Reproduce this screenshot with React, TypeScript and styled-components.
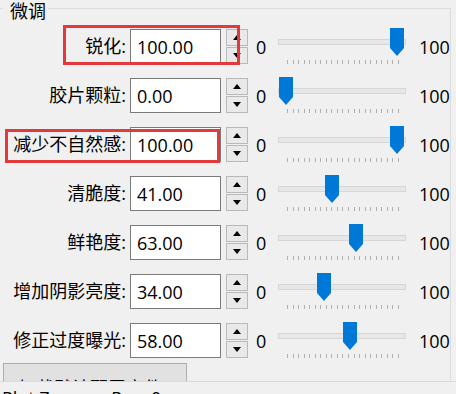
import React from "react";
import styled, { createGlobalStyle } from "styled-components";

const Global = createGlobalStyle`
  html, body { margin: 0; padding: 0; background: #f0f0f0; }
  body { font-family: "Open Sans", "Noto Sans CJK SC", sans-serif; color: #000; }
`;

const Page = styled.div`
  width: 456px;
  height: 394px;
  overflow: hidden;
  background: #f0f0f0;
  display: flex;
  flex-direction: column;
  font-family: "Open Sans", "Noto Sans CJK SC", sans-serif;
`;

const Viewport = styled.div`
  height: 381px;
  overflow: hidden;
  flex: none;
`;

const Group = styled.fieldset`
  margin: 0 5px 0 0;
  padding: 12px 0 0 0;
  border: 1px solid #dcdcdc;
  border-left: none;
  min-width: 0;
`;

const Legend = styled.legend`
  margin-left: 3px;
  padding: 0 2px 0 7px;
  font-size: 18px;
  line-height: 22px;
  height: 17px;
`;

const Rows = styled.div`
  display: flex;
  flex-direction: column;
  gap: 14px;
`;

const Row = styled.div`
  position: relative;
  display: flex;
  align-items: center;
  height: 35px;
`;

const Label = styled.div`
  width: 126px;
  margin-right: 4px;
  text-align: right;
  font-size: 18px;
  line-height: 35px;
  white-space: nowrap;
`;

const ValueBox = styled.input`
  box-sizing: border-box;
  width: 91px;
  height: 35px;
  margin: 0;
  padding: 0 0 0 6px;
  border: 1px solid #7a7a7a;
  background: #fff;
  font-family: "Open Sans", "Noto Sans CJK SC", sans-serif;
  font-size: 18px;
  color: #000;
  outline: none;
`;

const Spinner = styled.div`
  margin-left: 5px;
  width: 22px;
  height: 35px;
  display: flex;
  flex-direction: column;
  gap: 1px;
`;

const SpinButton = styled.div`
  box-sizing: border-box;
  flex: 1;
  border: 1px solid #b9b9b9;
  background: #e9e9e9;
  display: flex;
  align-items: center;
  justify-content: center;
`;

const Arrow = styled.div<{ $up?: boolean }>`
  width: 0;
  height: 0;
  border-left: 4px solid transparent;
  border-right: 4px solid transparent;
  ${(p) => (p.$up ? "border-bottom: 5px solid #000;" : "border-top: 5px solid #000;")}
`;

const MinText = styled.div`
  margin-left: 8px;
  width: 22px;
  font-size: 18px;
`;

const Slider = styled.div`
  position: relative;
  width: 128px;
  height: 35px;
`;

const Track = styled.div`
  position: absolute;
  left: 0;
  right: 0;
  top: 10px;
  height: 6px;
  box-sizing: border-box;
  background: #e7e7e7;
  border: 1px solid #d6d6d6;
`;

const Thumb = styled.svg`
  position: absolute;
  top: -1px;
  width: 14px;
  height: 28px;
`;

const Ticks = styled.div`
  position: absolute;
  left: 9px;
  width: 112px;
  top: 31px;
  height: 4px;
  display: flex;
  justify-content: space-between;
`;

const Tick = styled.span`
  width: 1px;
  height: 4px;
  background: #b0b0b0;
`;

const MaxText = styled.div`
  margin-left: 13px;
  font-size: 18px;
`;

const Highlight = styled.div<{ $l: number; $t: number; $w: number; $h: number }>`
  position: absolute;
  left: ${(p) => p.$l}px;
  top: ${(p) => p.$t}px;
  width: ${(p) => p.$w}px;
  height: ${(p) => p.$h}px;
  box-sizing: border-box;
  border: 3px solid #e5383b;
  pointer-events: none;
`;

const ActionButton = styled.div`
  box-sizing: border-box;
  margin: 5px 0 0 3px;
  width: 184px;
  height: 40px;
  border: 1px solid #adadad;
  background: #e1e1e1;
  font-size: 18px;
  line-height: 48px;
  padding-left: 14px;
  white-space: nowrap;
  overflow: hidden;
`;

const StatusBar = styled.div`
  flex: 1;
  border-top: 1px solid #dadada;
  padding: 6px 0 0 2px;
  font-size: 18px;
  line-height: 20px;
  white-space: pre;
`;

type Item = {
  label: string;
  value: number;
  hl?: { l: number; t: number; w: number; h: number };
};

const items: Item[] = [
  { label: "锐化:", value: 100, hl: { l: 63, t: -4, w: 177, h: 40 } },
  { label: "胶片颗粒:", value: 0 },
  { label: "减少不自然感:", value: 100, hl: { l: 5, t: 2, w: 215, h: 34 } },
  { label: "清脆度:", value: 41 },
  { label: "鲜艳度:", value: 63 },
  { label: "增加阴影亮度:", value: 34 },
  { label: "修正过度曝光:", value: 58 },
];

const ticks = Array.from({ length: 21 }, (_, i) => i);

function SliderRow({ item }: { item: Item }) {
  return (
    <Row>
      <Label>{item.label}</Label>
      <ValueBox readOnly value={item.value.toFixed(2)} />
      <Spinner>
        <SpinButton>
          <Arrow $up />
        </SpinButton>
        <SpinButton>
          <Arrow />
        </SpinButton>
      </Spinner>
      <MinText>0</MinText>
      <Slider>
        <Track />
        <Ticks>
          {ticks.map((t) => (
            <Tick key={t} />
          ))}
        </Ticks>
        <Thumb viewBox="0 0 14 28" style={{ left: 1 + item.value * 1.11 }}>
          <path d="M0 0 H14 V20 L7 28 L0 20 Z" fill="#0078d7" />
        </Thumb>
      </Slider>
      <MaxText>100</MaxText>
      {item.hl && <Highlight $l={item.hl.l} $t={item.hl.t} $w={item.hl.w} $h={item.hl.h} />}
    </Row>
  );
}

export default function App() {
  return (
    <>
      <Global />
      <Page>
        <Viewport>
          <Group>
            <Legend>微调</Legend>
            <Rows>
              {items.map((it) => (
                <SliderRow key={it.label} item={it} />
              ))}
            </Rows>
            <ActionButton>加载默认配置文件</ActionButton>
          </Group>
        </Viewport>
        <StatusBar>{"Plot Zoom:    Pos: 0"}</StatusBar>
      </Page>
    </>
  );
}
